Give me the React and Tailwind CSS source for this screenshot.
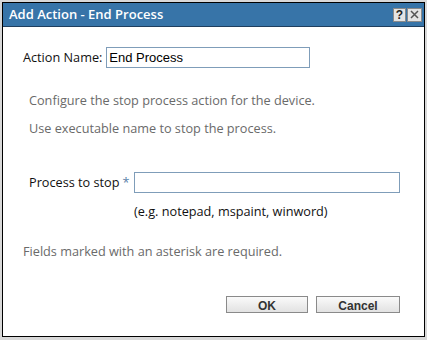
export default function App() {
  return (
    <div className="w-[427px] h-[340px] bg-[#d8d8d8] p-[2px] font-['Open_Sans',sans-serif]">
      <div className="flex h-[335px] w-[423px] flex-col border border-black bg-white">
        <div className="flex h-[24px] items-center justify-between border-b border-[#1f3f5f] bg-[#3774a8] pl-[6px] pr-[2px]">
          <span className="text-[13px] font-semibold text-white">Add Action - End Process</span>
          <div className="flex gap-[1px]">
            <span className="flex h-[14px] w-[13px] items-center justify-center border border-[#8a8a8a] bg-[#e4e4e4] font-['Liberation_Sans',sans-serif] text-[12px] font-bold leading-none text-[#222]">?</span>
            <span className="flex h-[14px] w-[15px] items-center justify-center border border-[#8a8a8a] bg-[#e4e4e4]">
              <svg width="9" height="9" viewBox="0 0 9 9">
                <path d="M1 1L8 8M8 1L1 8" stroke="#555" strokeWidth="1.5" />
              </svg>
            </span>
          </div>
        </div>

        <div className="flex flex-1 flex-col pl-[20px] pr-[24px] text-[12.7px]">
          <div className="mt-[20px] flex items-center">
            <span className="text-[#111]">Action Name:</span>
            <input
              defaultValue="End Process"
              className="ml-[4px] h-[21px] w-[204px] border border-[#7f9db9] px-[2px] font-['Liberation_Sans',sans-serif] text-[13px] text-black outline-none"
            />
          </div>

          <p className="mt-[23px] pl-[6px] text-[#6a6a6a]">Configure the stop process action for the device.</p>
          <p className="mt-[9px] pl-[6px] text-[#6a6a6a]">Use executable name to stop the process.</p>

          <div className="mt-[34px] flex items-center pl-[6px]">
            <span className="w-[105px] text-[#111]">
              Process to stop<span className="ml-[3px] text-[#5a7fa8]">*</span>
            </span>
            <input className="h-[21px] w-[266px] border border-[#7f9db9] outline-none" />
          </div>
          <p className="mt-[9px] pl-[111px] text-[#111]">(e.g. notepad, mspaint, winword)</p>

          <p className="mt-[21px] text-[#6a6a6a]">Fields marked with an asterisk are required.</p>

          <div className="mt-[35px] flex justify-end gap-[8px] font-['Liberation_Sans',sans-serif] text-[12px] font-bold text-[#333]">
            <button className="h-[17px] w-[82px] border border-[#8a8a8a] bg-gradient-to-b from-[#fafafa] to-[#e2e2e2]">OK</button>
            <button className="h-[17px] w-[84px] border border-[#8a8a8a] bg-gradient-to-b from-[#fafafa] to-[#e2e2e2]">Cancel</button>
          </div>
        </div>
      </div>
    </div>
  );
}
